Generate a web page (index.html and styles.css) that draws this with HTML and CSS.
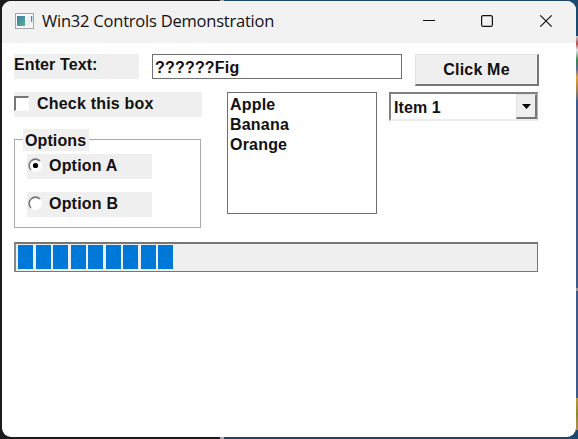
FILE: index.html
```html
<!DOCTYPE html>
<html lang="en">
<head>
<meta charset="utf-8">
<title>Win32 Controls Demonstration</title>
<link rel="stylesheet" href="styles.css">
</head>
<body>
<div class="window">
  <header class="titlebar">
    <svg class="app-icon" width="19" height="16" viewBox="0 0 19 16">
      <defs><linearGradient id="g" x1="0" y1="0" x2="1" y2="1"><stop offset="0" stop-color="#3f78ad"/><stop offset="1" stop-color="#55b389"/></linearGradient></defs>
      <rect x=".5" y=".5" width="18" height="15" fill="#f8f8f8" stroke="#a3a7ab"/>
      <rect x="2" y="3" width="8" height="10" fill="url(#g)"/>
      <rect x="11" y="3" width="5" height="10" fill="#edf1f3"/>
      <rect x="16" y="3" width="1.3" height="6" fill="url(#g)"/>
    </svg>
    <h1 class="title">Win32 Controls Demonstration</h1>
    <svg class="caption" width="135" height="14" viewBox="0 0 135 14" fill="none" stroke="#111" stroke-width="1.2">
      <path d="M1 6.5h12"/>
      <rect x="59.6" y="1.6" width="10.8" height="10.8" rx="1.5"/>
      <path d="M118.3 1.3l11.4 11.4M129.7 1.3l-11.4 11.4"/>
    </svg>
  </header>
  <main class="client">
    <div class="row row-top">
      <div class="label">Enter Text:</div>
      <div class="edit">??????Fig</div>
      <div class="button">Click Me</div>
    </div>
    <div class="row row-main">
      <div class="left">
        <div class="check"><span class="box"></span><span class="check-text">Check this box</span></div>
        <div class="group">
          <div class="legend">Options</div>
          <div class="radio">
            <svg width="15" height="15" viewBox="0 0 15 15"><circle cx="7.5" cy="7.5" r="6.5" fill="#fff"/><path d="M3 12A6.3 6.3 0 0 1 12 3" fill="none" stroke="#777" stroke-width="1.6"/><circle cx="7.5" cy="7.5" r="2.6" fill="#000"/></svg>
            <span>Option A</span>
          </div>
          <div class="radio">
            <svg width="15" height="15" viewBox="0 0 15 15"><circle cx="7.5" cy="7.5" r="6.5" fill="#fff"/><path d="M3 12A6.3 6.3 0 0 1 12 3" fill="none" stroke="#777" stroke-width="1.6"/></svg>
            <span>Option B</span>
          </div>
        </div>
      </div>
      <div class="list"><div>Apple</div><div>Banana</div><div>Orange</div></div>
      <div class="combo">
        <span>Item 1</span>
        <div class="drop"><svg width="9" height="5" viewBox="0 0 9 5"><path d="M0 0h9L4.5 5z" fill="#000"/></svg></div>
      </div>
    </div>
    <div class="progress"><i></i><i></i><i></i><i></i><i></i><i></i><i></i><i></i><i></i></div>
  </main>
</div>
</body>
</html>
```
FILE: styles.css
```css
* { box-sizing: border-box; }
body {
  margin: 0;
  width: 578px;
  height: 439px;
  overflow: hidden;
  padding: 1px 2px 2px;
  background:
    linear-gradient(#c4c8cf, #b14a4a 12%, #e4e8ee 22%, #38834a 38%, #5c6a9b 52%, #d7a33c 64%, #b98c3c 78%, #53698f) 576px 36px / 2px 64px no-repeat,
    linear-gradient(#b79a44, #8c8a28 50%, #b08d52) 576px 398px / 2px 32px no-repeat,
    linear-gradient(#9299a5, #9299a5) 576px 288px / 2px 3px no-repeat,
    linear-gradient(#3d5b8a, #3d5b8a) 576px 100px / 2px 330px no-repeat,
    linear-gradient(90deg, #1c1c1e 220px, #aaa 220px, #aaa 224px, #1b486c 224px);
  font: bold 16px/20px "Liberation Sans", Arial, sans-serif;
  letter-spacing: .2px;
  color: #111;
}
.window {
  width: 574px;
  height: 436px;
  border-radius: 9px;
  overflow: hidden;
  background: #fff;
}
.titlebar {
  display: flex;
  align-items: center;
  height: 42px;
  padding: 0 19px 2px 13px;
  background: #f2f2f2;
}
.title {
  margin: 0 0 0 8px;
  flex: 1;
  font: 400 16.5px/22px "Open Sans", "Noto Sans", sans-serif;
  letter-spacing: -.22px;
  white-space: nowrap;
}
.caption { flex: none; }
.client { padding: 11px 0 0 12px; }
.row { display: flex; align-items: flex-start; }
.row-top { height: 38px; }
.label { width: 125px; height: 25px; background: #efefef; padding-top: 1px; letter-spacing: .1px; }
.edit {
  width: 250px;
  height: 25px;
  margin: 0 13px;
  padding: 3px 0 0 2px;
  border: 1px solid #6f6f6f;
}
.button {
  width: 124px;
  height: 32px;
  padding-top: 5px;
  text-align: center;
  background: #efefef;
  border: 1px solid #e3e3e3;
  border-right: 2px solid #777;
  border-bottom: 2px solid #777;
}
.row-main { height: 136px; }
.left { width: 187px; margin-right: 26px; }
.check { display: flex; align-items: center; width: 188px; height: 25px; background: #efefef; padding-bottom: 2px; }
.box { width: 15px; height: 15px; margin-right: 8px; background: #fff; border: 1px solid #fafafa; border-top: 2px solid #777; border-left: 2px solid #777; }
.group {
  height: 89px;
  margin-top: 22px;
  padding-left: 12px;
  border: 1px solid #aaa;
}
.legend { width: 66px; height: 22px; margin: -11px 0 3px -4px; padding: 2px 0 0 2px; background: #efefef; letter-spacing: .1px; }
.radio { display: flex; align-items: center; width: 125px; height: 25px; margin-bottom: 13px; padding-bottom: 2px; background: #efefef; }
.radio svg { margin-left: 1px; margin-right: 6px; }
.radio span { padding-top: 1px; }
.list { width: 150px; height: 122px; padding: 2px 3px 1px 2px; border: 1px solid #6f6f6f; }
.combo {
  display: flex;
  justify-content: space-between;
  width: 149px;
  height: 29px;
  margin-left: 12px;
  padding-left: 3px;
  border: 2px solid #808080;
  border-right: 1px solid #b8b8b8;
  border-bottom: 2px solid #ededed;
}
.combo span { padding-top: 4px; letter-spacing: .1px; }
.drop {
  display: flex;
  align-items: center;
  justify-content: center;
  width: 21px;
  height: 25px;
  background: #efefef;
  border: 1px solid #e3e3e3;
  border-right: 2px solid #777;
  border-bottom: 2px solid #777;
}
.progress {
  display: flex;
  gap: 2.5px;
  width: 524px;
  height: 30px;
  margin-top: 14px;
  padding: 1px 2px;
  background: #efefef;
  border: 1px solid #777;
  border-top: 2px solid #777;
  border-left: 2px solid #888;
}
.progress i { width: 15px; height: 24px; background: #0078d7; }
```
